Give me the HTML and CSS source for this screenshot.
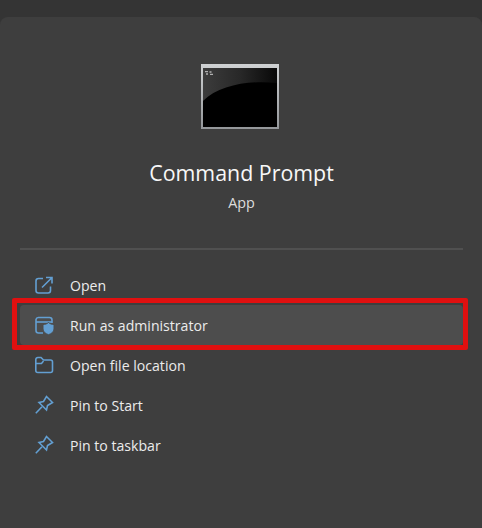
FILE: index.html
```html
<!DOCTYPE html>
<html lang="en">
<head>
    <meta charset="UTF-8">
    <meta name="viewport" content="width=device-width, initial-scale=1.0">
    <title>Command Prompt</title>
    <link rel="stylesheet" href="styles.css">
</head>
<body>

    <div class="panel">
        <div class="app-head">
            <svg class="app-icon" width="78" height="65" viewBox="0 0 78 65">
                <defs>
                    <linearGradient id="frame" x1="0" y1="0" x2="0" y2="1">
                        <stop offset="0" stop-color="#cfd1d3"/>
                        <stop offset="1" stop-color="#94979a"/>
                    </linearGradient>
                    <linearGradient id="glow" x1="0" y1="0" x2="1" y2="0">
                        <stop offset="0" stop-color="#3c3c3c"/>
                        <stop offset="0.5" stop-color="#282828"/>
                        <stop offset="1" stop-color="#080808"/>
                    </linearGradient>
                    <filter id="soft">
                        <feGaussianBlur stdDeviation="0.500"/>
                    </filter>
                </defs>
                <rect width="78" height="65" fill="url(#frame)"/>
                <rect x="2" y="4" width="74" height="59" fill="#000"/>
                <path d="M2 4H76V19C48 16 18 21 2 37Z" fill="url(#glow)"/>
                <path d="M4 7.500h3M8.500 8h2M5 10h2M9 10.500h3" stroke="#b0b0b0" stroke-width="1.400" fill="none" filter="url(#soft)"/>
            </svg>
            <h1>Command Prompt</h1>
            <p>App</p>
        </div>

        <div class="divider"></div>

        <div class="menu">
            <div class="menu-item">
                <svg class="menu-icon" width="20" height="20" viewBox="0 0 20 20">
                    <path d="M9 3.500H4.500A2.500 2.500 0 0 0 2 6V15.500A2.500 2.500 0 0 0 4.500 18H14A2.500 2.500 0 0 0 16.500 15.500V11.500"/>
                    <path d="M12 2.500H18V8.500M17.800 2.700L8 12.500"/>
                </svg>
                <span>Open</span>
            </div>
            <div class="menu-item active">
                <svg class="menu-icon" width="20" height="20" viewBox="0 0 20 20">
                    <path d="M9 18H4.500A2.500 2.500 0 0 1 2 15.500V4.500A2.500 2.500 0 0 1 4.500 2.500H15.500A2.500 2.500 0 0 1 18 5V8"/>
                    <path d="M2 7H18"/>
                    <path class="shield" d="M14.500 7.500C15.800 8.800 17.800 9.400 20 9.500V14C20 16.800 17.500 18.700 14.500 19.700C11.500 18.700 9 16.800 9 14V9.500C11.200 9.400 13.200 8.800 14.500 7.500Z"/>
                </svg>
                <span>Run as administrator</span>
            </div>
            <div class="menu-item">
                <svg class="menu-icon" width="20" height="20" viewBox="0 0 20 20">
                    <path d="M1.800 15.500V4.500A2 2 0 0 1 3.800 2.500H7L9.500 5H16.500A2 2 0 0 1 18.500 7V15.500A2 2 0 0 1 16.500 17.500H3.800A2 2 0 0 1 1.800 15.500Z"/>
                    <path d="M1.800 8.500H7.500L9.500 6"/>
                </svg>
                <span>Open file location</span>
            </div>
            <div class="menu-item">
                <svg class="menu-icon" width="20" height="20" viewBox="0 0 20 20">
                    <path d="M12.500 1.500L18.500 7.500L13.500 10.500L12.500 15L5 7.500L9.500 6.500Z"/>
                    <path d="M8 11.800L1.800 18.200"/>
                </svg>
                <span>Pin to Start</span>
            </div>
            <div class="menu-item">
                <svg class="menu-icon" width="20" height="20" viewBox="0 0 20 20">
                    <path d="M12.500 1.500L18.500 7.500L13.500 10.500L12.500 15L5 7.500L9.500 6.500Z"/>
                    <path d="M8 11.800L1.800 18.200"/>
                </svg>
                <span>Pin to taskbar</span>
            </div>
        </div>

        <div class="callout"></div>
    </div>

</body>
</html>
```

FILE: styles.css
```css
html, body {
    height: 100%;
}

body {
    font-family: "Open Sans", "Noto Sans", sans-serif;
    background-color: #343434;
    margin: 0;
    padding: 17px 0 0;
    box-sizing: border-box;
    overflow: hidden;
    color: #f2f2f2;
}

.panel {
    position: relative;
    height: 100%;
    background-color: #3e3e3e;
    border-radius: 8px 8px 0 0;
    padding: 47px 20px 0;
    box-sizing: border-box;
}

.app-head {
    display: flex;
    flex-direction: column;
    align-items: center;
    width: 443px;
    height: 184px;
}

.app-icon {
    display: block;
    margin-right: 3px;
}

.app-head h1 {
    margin: 29px 0 0;
    font-size: 21.400px;
    line-height: 30px;
    font-weight: 400;
    color: #f8f8f8;
}

.app-head p {
    margin: 5px 0 0;
    font-size: 14.400px;
    line-height: 20px;
    color: #dcdcdc;
}

.divider {
    height: 2px;
    width: 443px;
    background-color: #505050;
}

.menu {
    margin-top: 15px;
}

.menu-item {
    display: flex;
    align-items: center;
    gap: 16px;
    height: 40px;
    width: 443px;
    box-sizing: border-box;
    padding-left: 14px;
    font-size: 14.100px;
    color: #ececec;
    border-radius: 4px;
}

.menu-item.active {
    background-color: #4d4d4d;
}

.menu-icon {
    fill: none;
    stroke: #639fd2;
    stroke-width: 1.600;
    flex: none;
    overflow: visible;
}

.menu-icon .shield {
    fill: #639fd2;
    stroke: #4d4d4d;
    stroke-width: 1;
}

.callout {
    position: absolute;
    left: 12px;
    top: 281px;
    width: 456px;
    height: 52px;
    box-sizing: border-box;
    border: 5px solid #e01010;
    border-radius: 2px;
}
```
